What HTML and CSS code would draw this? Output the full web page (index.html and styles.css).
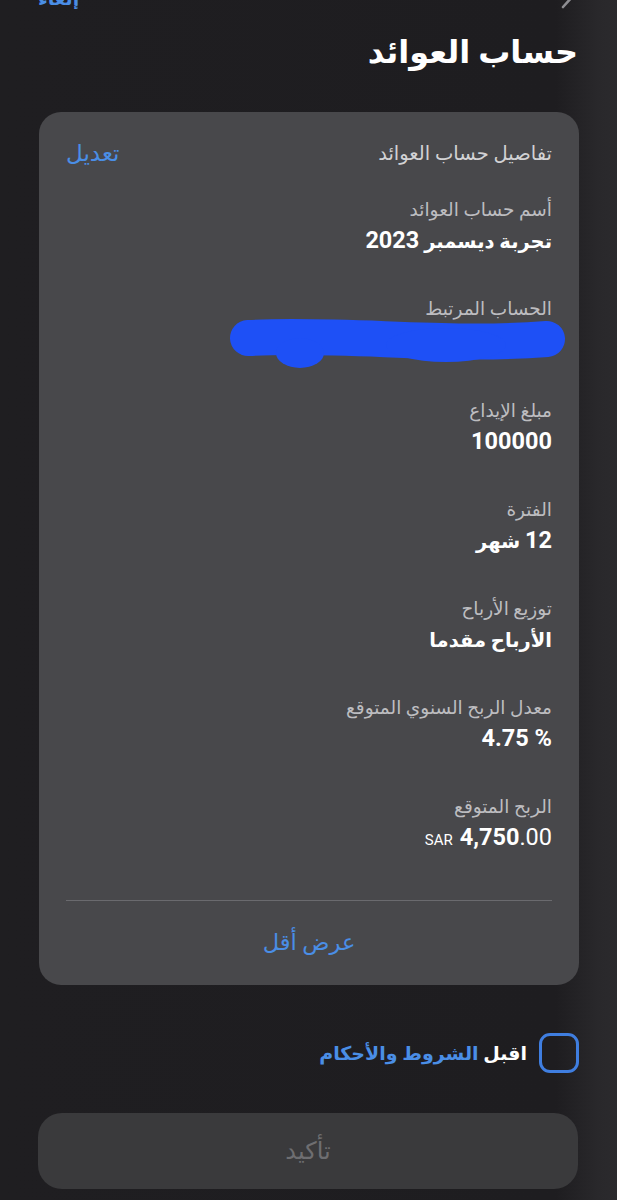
FILE: index.html
```html
<!DOCTYPE html>
<html lang="ar" dir="rtl">
<head>
    <meta charset="UTF-8">
    <meta name="viewport" content="width=device-width, initial-scale=1.0">
    <title>حساب العوائد</title>
    <link rel="stylesheet" href="styles.css">
</head>
<body>
    <div class="top-bar">
        <svg class="back-icon" width="16" height="26" viewBox="0 0 16 26">
            <path d="M3 2 L13 13 L3 24" fill="none" stroke="#8e8e92" stroke-width="2.6" stroke-linecap="round" stroke-linejoin="round"/>
        </svg>
        <a class="cancel-link" href="#">إلغاء</a>
    </div>

    <h1>حساب العوائد</h1>

    <div class="card">
        <div class="card-header">
            <span class="card-title">تفاصيل حساب العوائد</span>
            <a class="edit-link" href="#">تعديل</a>
        </div>

        <div class="fields">
            <div class="field">
                <div class="field-label">أسم حساب العوائد</div>
                <div class="field-value">تجربة ديسمبر <span class="num">2023</span></div>
            </div>
            <div class="field">
                <div class="field-label">الحساب المرتبط</div>
                <svg class="redacted" width="486" height="48" viewBox="0 0 486 48">
                    <path d="M182 17 C 280 12, 380 26, 481 18" fill="none" stroke="#1e50f6" stroke-width="36" stroke-linecap="round"/>
                    <ellipse cx="234" cy="32" rx="24" ry="15" fill="#1e50f6"/>
                    <ellipse cx="380" cy="24" rx="60" ry="17" fill="#1e50f6"/>
                </svg>
            </div>
            <div class="field">
                <div class="field-label">مبلغ الإيداع</div>
                <div class="field-value"><span class="num">100000</span></div>
            </div>
            <div class="field">
                <div class="field-label">الفترة</div>
                <div class="field-value"><span class="num">12</span> شهر</div>
            </div>
            <div class="field">
                <div class="field-label">توزيع الأرباح</div>
                <div class="field-value">الأرباح مقدما</div>
            </div>
            <div class="field">
                <div class="field-label">معدل الربح السنوي المتوقع</div>
                <div class="field-value ltr"><span class="num">4.75 %</span></div>
            </div>
            <div class="field">
                <div class="field-label">الربح المتوقع</div>
                <div class="field-value ltr">
                    <span class="currency">SAR</span>
                    <span class="num">4,750<span class="decimals">.00</span></span>
                </div>
            </div>
        </div>

        <div class="card-footer">
            <a class="less-link" href="#">عرض أقل</a>
        </div>
    </div>

    <label class="terms">
        <span class="checkbox"></span>
        <span class="terms-text">اقبل <a href="#">الشروط والأحكام</a></span>
    </label>

    <button class="confirm-btn" disabled>تأكيد</button>
</body>
</html>
```

FILE: styles.css
```css
body {
    margin: 0;
    padding: 0;
    font-family: Roboto, "DejaVu Sans", sans-serif;
    color: #fff;
    background: linear-gradient(to right, #1f1e21 0%, #1e1d20 90%, #29282b 97%, #2b2a2d 100%);
    min-height: 1200px;
}

a {
    color: #4a8ee6;
    text-decoration: none;
}

.top-bar {
    height: 9px;
    overflow: hidden;
    display: flex;
    justify-content: space-between;
    align-items: flex-end;
    padding: 0 41px 0 38px;
}

.back-icon {
    display: block;
    flex-shrink: 0;
}

.cancel-link {
    font-size: 19px;
    line-height: 20px;
    font-weight: bold;
}

h1 {
    margin: 23px 39px 40px 0;
    font-size: 32px;
    line-height: 40px;
    font-weight: bold;
    color: #fff;
}

.card {
    margin: 0 38px 0 39px;
    padding: 28px 27px 0;
    background-color: #48484b;
    border-radius: 22px;
}

.card-header {
    display: flex;
    justify-content: space-between;
    align-items: center;
    height: 26px;
}

.card-title {
    font-size: 19.5px;
    color: #d2d2d4;
}

.edit-link {
    font-size: 23px;
}

.fields {
    display: flex;
    flex-direction: column;
    gap: 41px;
    margin-top: 32px;
}

.field-label {
    height: 24px;
    font-size: 18.5px;
    line-height: 24px;
    color: #bdbdc0;
}

.field-value {
    height: 28px;
    margin-top: 6px;
    font-size: 19.5px;
    line-height: 28px;
    font-weight: bold;
    color: #fff;
}

.num {
    font-size: 23.5px;
    line-height: 1;
}

.ltr {
    direction: ltr;
    text-align: right;
}

.currency {
    font-size: 15px;
    font-weight: normal;
    margin-right: 2px;
}

.decimals {
    font-weight: normal;
}

.redacted {
    display: block;
    overflow: visible;
    margin-bottom: -11px;
}

.card-footer {
    margin-top: 47px;
    border-top: 1px solid #6a6a6e;
    height: 82px;
    display: flex;
    align-items: center;
    justify-content: center;
    padding-bottom: 2px;
}

.less-link {
    font-size: 22.5px;
}

.terms {
    display: flex;
    align-items: center;
    gap: 12px;
    margin: 48px 38px 0 0;
    cursor: pointer;
}

.checkbox {
    width: 34px;
    height: 34px;
    border: 3px solid #3f7ee0;
    border-radius: 11px;
    flex-shrink: 0;
}

.terms-text {
    font-size: 19px;
    font-weight: bold;
    color: #fff;
}

.confirm-btn {
    display: block;
    width: 540px;
    height: 76px;
    margin: 40px 39px 0 0;
    background-color: #3a3a3c;
    color: #6e6e71;
    border: none;
    border-radius: 24px;
    font-family: Roboto, "DejaVu Sans", sans-serif;
    font-size: 24px;
}
```
